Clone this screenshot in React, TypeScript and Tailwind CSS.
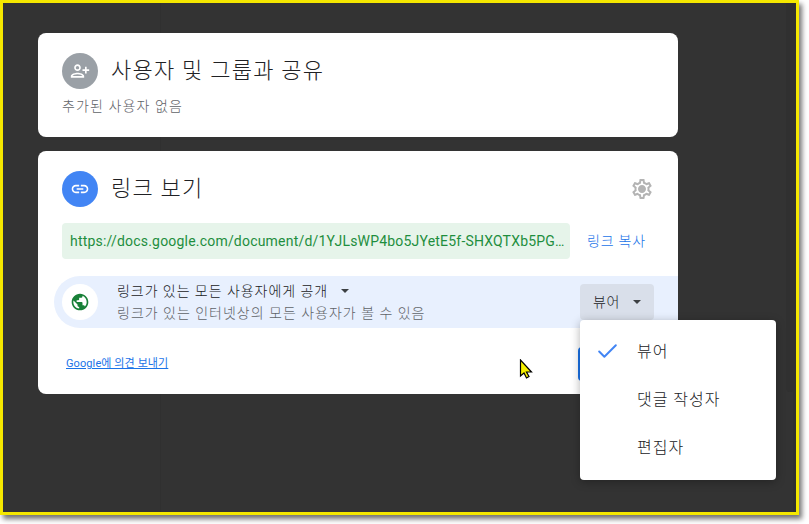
import { Check } from 'lucide-react';

const font = "font-['Roboto','Noto_Sans_CJK_KR',sans-serif]";

const Caret = () => (
    <svg width="8" height="4" viewBox="0 0 10 5" className="fill-[#3c4043]">
        <path d="M0 0l5 5 5-5z" />
    </svg>
);

const App = () => {
    return (
        <div className={`relative w-[809px] h-[524px] overflow-hidden bg-white ${font}`}>
            {/* Window */}
            <div className="relative w-[799px] h-[515px] border-[3px] border-[#f5e800] bg-[#333333] shadow-[3px_4px_5px_rgba(0,0,0,0.55)] pt-[30px] pl-[35px]">
                <div className="absolute left-[157px] top-0 bottom-0 w-px bg-[#303030]" />
                <div className="absolute left-[783px] top-0 h-[389px] w-[8px] rounded-b bg-[#303030]" />
                <div className="absolute right-0 top-0 bottom-0 w-[3px] bg-[#303030]" />

                <div className="relative w-[640px] flex flex-col gap-[14px]">
                    {/* Share with people */}
                    <div className="h-[104px] rounded-lg bg-white pt-[20px] pl-[24px]">
                        <div className="flex items-center gap-[13px]">
                            <div className="flex h-9 w-9 items-center justify-center rounded-full bg-[#9aa0a6]">
                                <svg width="20" height="20" viewBox="0 0 24 24" className="-scale-x-100 fill-white">
                                    <path d="M15 12c2.21 0 4-1.79 4-4s-1.79-4-4-4-4 1.79-4 4 1.79 4 4 4zm0-6c1.1 0 2 .9 2 2s-.9 2-2 2-2-.9-2-2 .9-2 2-2zm0 8c-2.67 0-8 1.34-8 4v2h16v-2c0-2.66-5.33-4-8-4zm-6 4c.22-.72 3.31-2 6-2 2.7 0 5.8 1.29 6 2H9zm-3-3v-3h3v-2H6V7H4v3H1v2h3v3h2z" />
                                </svg>
                            </div>
                            <h2 className="text-[22px] font-light leading-7 tracking-[1.25px] text-[#202124]">사용자 및 그룹과 공유</h2>
                        </div>
                        <p className="mt-[7px] text-[14px] font-light leading-5 tracking-[1.1px] text-[#5f6368]">추가된 사용자 없음</p>
                    </div>

                    {/* Get link */}
                    <div className="relative h-[243px] rounded-lg bg-white pt-[20px]">
                        <div className="flex items-center justify-between pl-[24px] pr-[24px]">
                            <div className="flex items-center gap-[13px]">
                                <div className="flex h-9 w-9 items-center justify-center rounded-full bg-[#4285f4]">
                                    <svg width="20" height="20" viewBox="0 0 24 24" className="fill-white">
                                        <path d="M3.9 12c0-1.71 1.39-3.1 3.1-3.1h4V7H7c-2.76 0-5 2.24-5 5s2.24 5 5 5h4v-1.9H7c-1.71 0-3.1-1.39-3.1-3.1zM8 13h8v-2H8v2zm9-6h-4v1.9h4c1.71 0 3.1 1.39 3.1 3.1s-1.39 3.1-3.1 3.1h-4V17h4c2.76 0 5-2.24 5-5s-2.24-5-5-5z" />
                                    </svg>
                                </div>
                                <h2 className="text-[22px] font-light leading-7 tracking-[1.25px] text-[#202124]">링크 보기</h2>
                            </div>
                            <svg width="24" height="24" viewBox="0 0 24 24" className="fill-[#b4b4b4]">
                                <path d="M19.43 12.98c.04-.32.07-.64.07-.98 0-.34-.03-.66-.07-.98l2.11-1.65c.19-.15.24-.42.12-.64l-2-3.46c-.09-.16-.26-.25-.44-.25-.06 0-.12.01-.17.03l-2.49 1c-.52-.4-1.08-.73-1.69-.98l-.38-2.65C14.46 2.18 14.25 2 14 2h-4c-.25 0-.46.18-.49.42l-.38 2.65c-.61.25-1.17.59-1.69.98l-2.49-1c-.06-.02-.12-.03-.18-.03-.17 0-.34.09-.43.25l-2 3.46c-.13.22-.07.49.12.64l2.11 1.65c-.04.32-.07.65-.07.98 0 .33.03.66.07.98l-2.11 1.65c-.19.15-.24.42-.12.64l2 3.46c.09.16.26.25.44.25.06 0 .12-.01.17-.03l2.49-1c.52.4 1.08.73 1.69.98l.38 2.65c.03.24.24.42.49.42h4c.25 0 .46-.18.49-.42l.38-2.65c.61-.25 1.17-.59 1.69-.98l2.49 1c.06.02.12.03.18.03.17 0 .34-.09.43-.25l2-3.46c.12-.22.07-.49-.12-.64l-2.11-1.65zm-1.98-1.71c.04.31.05.52.05.73 0 .21-.02.43-.05.73l-.14 1.13.89.7 1.08.84-.7 1.21-1.27-.51-1.04-.42-.9.68c-.43.32-.84.56-1.25.73l-1.06.43-.16 1.13-.2 1.35h-1.4l-.19-1.35-.16-1.13-1.06-.43c-.43-.18-.83-.41-1.23-.71l-.91-.7-1.06.43-1.27.51-.7-1.21 1.08-.84.89-.7-.14-1.13c-.03-.31-.05-.54-.05-.74s.02-.43.05-.73l.14-1.13-.89-.7-1.08-.84.7-1.21 1.27.51 1.04.42.9-.68c.43-.32.84-.56 1.25-.73l1.06-.43.16-1.13.2-1.35h1.39l.19 1.35.16 1.13 1.06.43c.43.18.83.41 1.23.71l.91.7 1.06-.43 1.27-.51.7 1.21-1.07.85-.89.7.14 1.13zM12 8c-2.21 0-4 1.79-4 4s1.79 4 4 4 4-1.79 4-4-1.79-4-4-4z" />
                            </svg>
                        </div>

                        <div className="mt-[16px] flex items-center pl-[24px]">
                            <div className="flex h-9 w-[508px] items-center rounded bg-[#e6f4ea] px-2">
                                <span className="whitespace-nowrap text-sm tracking-[0.2px] text-[#1e8e3e]">https://docs.google.com/document/d/1YJLsWP4bo5JYetE5f-SHXQTXb5PG…</span>
                            </div>
                            <span className="ml-[17px] text-[14px] font-light tracking-[0.8px] text-[#1a73e8]">링크 복사</span>
                        </div>

                        {/* Access row */}
                        <div className="mt-[17px] ml-[16px] flex h-[52px] items-center rounded-l-[26px] bg-[#e8f0fe] pl-2">
                            <div className="flex h-9 w-9 items-center justify-center rounded-full bg-white">
                                <svg width="20" height="20" viewBox="0 0 24 24" className="fill-[#188038]">
                                    <path d="M12 2C6.48 2 2 6.48 2 12s4.48 10 10 10 10-4.48 10-10S17.52 2 12 2zm-1 17.93c-3.95-.49-7-3.85-7-7.93 0-.62.08-1.21.21-1.79L9 15v1c0 1.1.9 2 2 2v1.93zm6.9-2.54c-.26-.81-1-1.39-1.9-1.39h-1v-3c0-.55-.45-1-1-1H8v-2h2c.55 0 1-.45 1-1V7h2c1.1 0 2-.9 2-2v-.41c2.93 1.19 5 4.06 5 7.41 0 2.08-.8 3.97-2.1 5.39z" />
                                </svg>
                            </div>
                            <div className="ml-[19px] w-[463px]">
                                <div className="flex items-center gap-[13px] text-[14px] font-light leading-[22px] tracking-[0.95px] text-[#202124]">
                                    링크가 있는 모든 사용자에게 공개
                                    <Caret />
                                </div>
                                <div className="text-[14px] font-light leading-[22px] tracking-[1px] text-[#5f6368]">
                                    링크가 있는 인터넷상의 모든 사용자가 볼 수 있음
                                </div>
                            </div>
                            <div className="flex h-9 w-[74px] items-center gap-[13px] rounded bg-[#d9dfea] pl-[13px] text-[14px] font-light tracking-[0.6px] text-[#202124]">
                                뷰어
                                <Caret />
                            </div>
                        </div>

                        {/* Footer */}
                        <div className="mt-[19px] flex items-center justify-between pl-[28px]">
                            <a className="text-[11px] leading-4 tracking-[0.1px] text-[#1a73e8] underline">Google에 의견 보내기</a>
                            <div className="mr-[24px] h-[34px] w-[76px] rounded bg-[#1a73e8]" />
                        </div>
                    </div>
                </div>
            </div>

            {/* Role menu */}
            <div className="absolute left-[580px] top-[320px] w-[196px] h-[160px] rounded bg-white pt-[8px] shadow-[0_2px_10px_rgba(0,0,0,0.3)]">
                <div className="relative flex h-12 items-center pl-[57px] text-[16px] font-light tracking-[1px] text-[#202124]">
                    <Check className="absolute left-[15px] top-[11px] h-[25px] w-[25px] text-[#4285f4]" strokeWidth={1.9} />
                    뷰어
                </div>
                <div className="flex h-12 items-center pl-[57px] text-[16px] font-light tracking-[1px] text-[#202124]">댓글 작성자</div>
                <div className="flex h-12 items-center pl-[57px] text-[16px] font-light tracking-[1px] text-[#202124]">편집자</div>
            </div>

            {/* Mouse pointer */}
            <svg className="absolute left-[519px] top-[359px]" width="16" height="20" viewBox="0 0 16 20">
                <path d="M1.5 1v16l3.5-3 2.5 5 2.500-1.500-2.500-4.500h5z" fill="#f5f000" stroke="#000" strokeWidth="1.200" />
            </svg>
        </div>
    );
};

export default App;
